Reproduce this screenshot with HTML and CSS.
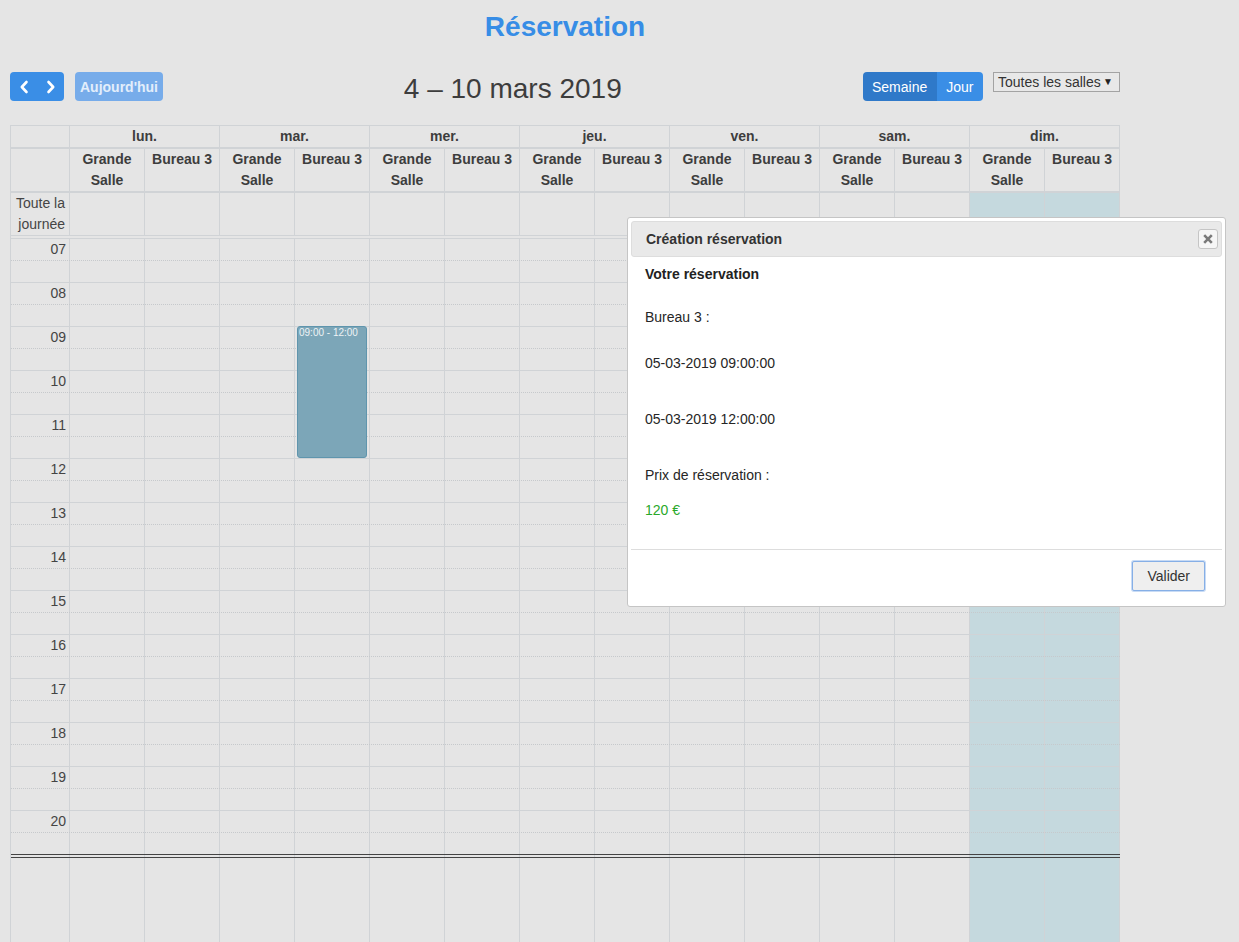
FILE: index.html
```html
<!DOCTYPE html>
<html lang="fr">
<head>
<meta charset="utf-8">
<title>Réservation</title>
<link rel="stylesheet" href="styles.css">
</head>
<body>
<div class="page">
  <h1 class="title">Réservation</h1>
  <div class="toolbar">
    <div class="tb-left">
      <div class="btn-group">
        <button class="btn btn-icon" aria-label="Précédent"><svg width="10" height="14" viewBox="0 0 10 14"><polyline points="7.5,2 2.8,7 7.5,12" fill="none" stroke="#fff" stroke-width="2.6" stroke-linecap="round" stroke-linejoin="round"/></svg></button>
        <button class="btn btn-icon" aria-label="Suivant"><svg width="10" height="14" viewBox="0 0 10 14"><polyline points="2.5,2 7.2,7 2.5,12" fill="none" stroke="#fff" stroke-width="2.6" stroke-linecap="round" stroke-linejoin="round"/></svg></button>
      </div>
      <button class="btn btn-today">Aujourd'hui</button>
    </div>
    <h2 class="range">4 – 10 mars 2019</h2>
    <div class="tb-right">
      <div class="btn-group">
        <button class="btn btn-active">Semaine</button>
        <button class="btn">Jour</button>
      </div>
      <div class="select"><span>Toutes les salles</span><span class="caret">▼</span></div>
    </div>
  </div>

  <div class="cal">
    <div class="row days">
      <div></div>
      <div class="span2">lun.</div>
      <div class="span2">mar.</div>
      <div class="span2">mer.</div>
      <div class="span2">jeu.</div>
      <div class="span2">ven.</div>
      <div class="span2">sam.</div>
      <div class="span2">dim.</div>
    </div>
    <div class="row res">
      <div></div>
      <div>Grande Salle</div><div>Bureau 3</div>
      <div>Grande Salle</div><div>Bureau 3</div>
      <div>Grande Salle</div><div>Bureau 3</div>
      <div>Grande Salle</div><div>Bureau 3</div>
      <div>Grande Salle</div><div>Bureau 3</div>
      <div>Grande Salle</div><div>Bureau 3</div>
      <div>Grande Salle</div><div>Bureau 3</div>
    </div>
    <div class="row allday">
      <div class="axis-label">Toute la journée</div>
      <div></div><div></div><div></div><div></div><div></div><div></div>
      <div></div><div></div><div></div><div></div><div></div><div></div>
      <div class="sun"></div><div class="sun"></div>
    </div>
    <div class="divider"></div>
    <div class="tg">
      <div class="cols">
        <div></div>
        <div></div><div></div><div></div><div></div><div></div><div></div>
        <div></div><div></div><div></div><div></div><div></div><div></div>
        <div class="sun"></div><div class="sun"></div>
      </div>
      <div class="slats">
        <div class="slat"><span class="hl">07</span></div><div class="slat half"></div>
        <div class="slat"><span class="hl">08</span></div><div class="slat half"></div>
        <div class="slat"><span class="hl">09</span></div><div class="slat half"></div>
        <div class="slat"><span class="hl">10</span></div><div class="slat half"></div>
        <div class="slat"><span class="hl">11</span></div><div class="slat half"></div>
        <div class="slat"><span class="hl">12</span></div><div class="slat half"></div>
        <div class="slat"><span class="hl">13</span></div><div class="slat half"></div>
        <div class="slat"><span class="hl">14</span></div><div class="slat half"></div>
        <div class="slat"><span class="hl">15</span></div><div class="slat half"></div>
        <div class="slat"><span class="hl">16</span></div><div class="slat half"></div>
        <div class="slat"><span class="hl">17</span></div><div class="slat half"></div>
        <div class="slat"><span class="hl">18</span></div><div class="slat half"></div>
        <div class="slat"><span class="hl">19</span></div><div class="slat half"></div>
        <div class="slat"><span class="hl">20</span></div><div class="slat half last"></div>
        <div class="dbl"></div>
        <div class="filler"></div>
      </div>
      <div class="event">09:00 - 12:00</div>
    </div>
  </div>
</div>

<div class="dialog">
  <div class="dlg-title">
    <span>Création réservation</span>
    <button class="dlg-close" aria-label="Fermer"><svg width="10" height="10" viewBox="0 0 10 10"><path d="M1.2 1.2 L8.8 8.8 M8.8 1.2 L1.2 8.8" stroke="#7a7a7a" stroke-width="2.6" stroke-linecap="butt"/></svg></button>
  </div>
  <div class="dlg-body">
    <div class="l1">Votre réservation</div>
    <div class="l2">Bureau 3 :</div>
    <div class="l3">05-03-2019 09:00:00</div>
    <div class="l4">05-03-2019 12:00:00</div>
    <div class="l5">Prix de réservation :</div>
    <div class="l6 price">120 €</div>
  </div>
  <div class="pane">
    <button class="btn-valider">Valider</button>
  </div>
</div>
</body>
</html>
```
FILE: styles.css
```css
:root {
  --line: #d0d3d6;
  --bg: #e5e5e5;
  --blue: #3a8ee6;
  --sun: #c5d9de;
}
html, body {
  margin: 0;
  padding: 0;
  overflow: hidden;
  background: var(--bg);
}
body {
  font-family: "Liberation Sans", Arial, sans-serif;
  font-size: 14px;
  color: #333;
  position: relative;
  height: 942px;
}
.page {
  padding: 0 10px;
  width: 1110px;
}
.title {
  margin: 0;
  padding-top: 11px;
  line-height: 32px;
  font-size: 28px;
  font-weight: bold;
  text-align: center;
  color: #378de6;
}
.toolbar {
  margin-top: 29px;
  display: grid;
  grid-template-columns: auto 1fr auto;
  align-items: start;
}
.tb-left, .tb-right {
  display: flex;
  align-items: flex-start;
}
.tb-right { gap: 10px; }
.btn-group { display: flex; }
.btn {
  font-family: inherit;
  font-size: 14px;
  height: 29px;
  border: none;
  margin: 0;
  padding: 0 9.5px;
  background: var(--blue);
  color: #fff;
  display: flex;
  align-items: center;
  justify-content: center;
}
.btn-group .btn:first-child { border-radius: 4px 0 0 4px; }
.btn-group .btn:last-child { border-radius: 0 4px 4px 0; }
.btn-icon { width: 27px; padding: 0; }
.btn-active { background: #2f79c9; }
.btn-today {
  margin-left: 11px;
  border-radius: 4px;
  padding: 0 5px;
  font-weight: bold;
  background: #77acea;
  color: #e3eefb;
}
.range {
  margin: 0;
  text-align: center;
  font-size: 28px;
  font-weight: normal;
  line-height: 29px;
  height: 29px;
  padding-top: 2px;
  box-sizing: content-box;
  color: #3d3d3d;
}
.select {
  width: 127px;
  height: 20px;
  box-sizing: border-box;
  border: 1px solid #a3a3a3;
  background: #e8e8e8;
  display: flex;
  align-items: center;
  justify-content: space-between;
  padding: 0 6px 0 4px;
  color: #333;
  font-size: 14px;
  line-height: 18px;
}
.caret { font-size: 10px; color: #222; }

/* calendar */
.cal {
  margin-top: 22px;
  width: 1110px;
  box-sizing: border-box;
  border-left: 1px solid var(--line);
  border-top: 1px solid var(--line);
}
.row {
  display: grid;
  grid-template-columns: 59px repeat(14, 75px);
}
.row > div {
  box-sizing: border-box;
  border-right: 1px solid var(--line);
}
.span2 { grid-column: span 2; }
.days { border-bottom: 2px solid var(--line); }
.days > div {
  line-height: 21px;
  height: 21px;
  text-align: center;
  font-weight: bold;
  color: #3d3d3d;
}
.res { border-bottom: 2px solid var(--line); }
.res > div {
  height: 42px;
  line-height: 21px;
  text-align: center;
  font-weight: bold;
  color: #3d3d3d;
  padding: 0 2px;
}
.allday { border-bottom: 1px solid var(--line); }
.allday > div { height: 42px; }
.axis-label {
  text-align: right;
  padding-right: 4px;
  line-height: 21px;
  color: #444;
}
.sun { background: var(--sun); }
.divider {
  height: 2px;
  border-right: 1px solid var(--line);
}
.tg {
  position: relative;
  display: grid;
  border-top: 1px solid var(--line);
}
.cols, .slats { grid-area: 1 / 1; }
.cols {
  display: grid;
  grid-template-columns: 59px repeat(14, 75px);
}
.cols > div {
  box-sizing: border-box;
  border-right: 1px solid var(--line);
}
.slat {
  height: 22px;
  box-sizing: border-box;
  border-bottom: 1px dotted #c6c9cc;
}
.slat.half { border-bottom: 1px solid var(--line); }
.slat.last { border-bottom: 1px solid #444; }
.hl {
  display: block;
  width: 59px;
  box-sizing: border-box;
  padding-right: 4px;
  text-align: right;
  line-height: 21px;
  color: #444;
}
.dbl {
  height: 3px;
  box-sizing: border-box;
  border-bottom: 1px solid #444;
}
.filler { height: 90px; }
.event {
  position: absolute;
  top: 87px;
  left: 286px;
  width: 70px;
  height: 132px;
  box-sizing: border-box;
  background: #7ca6b8;
  border: 1px solid #5f95ad;
  border-radius: 3px;
  color: #eef3f5;
  font-size: 10px;
  line-height: 12px;
  padding: 0 1px;
}

/* dialog */
.dialog {
  position: absolute;
  left: 627px;
  top: 217px;
  width: 599px;
  height: 390px;
  box-sizing: border-box;
  background: #fff;
  border: 1px solid #c5c5c5;
  border-radius: 3px;
  padding: 3px;
  color: #333;
  font-size: 14px;
  display: flex;
  flex-direction: column;
}
.dlg-title {
  height: 36px;
  box-sizing: border-box;
  border: 1px solid #dddddd;
  background: #e9e9e9;
  border-radius: 3px;
  display: flex;
  align-items: center;
  justify-content: space-between;
  padding: 0 3px 0 14px;
  font-weight: bold;
  color: #333;
}
.dlg-close {
  width: 20px;
  height: 20px;
  box-sizing: border-box;
  border: 1px solid #c5c5c5;
  background: #f6f6f6;
  border-radius: 3px;
  padding: 0;
  display: flex;
  align-items: center;
  justify-content: center;
}
.dlg-body {
  padding: 7px 13px 0 14px;
  line-height: 20px;
  color: #262626;
}
.l1 { font-weight: bold; color: #222; }
.l2 { margin-top: 23px; }
.l3 { margin-top: 26px; }
.l4 { margin-top: 36px; }
.l5 { margin-top: 36px; }
.l6 { margin-top: 15px; }
.price { color: #2aa82a; }
.pane {
  margin-top: 29px;
  border-top: 1px solid #dddddd;
  padding: 11px 17px 0 0;
  display: flex;
  justify-content: flex-end;
}
.btn-valider {
  height: 30px;
  box-sizing: border-box;
  padding: 0 14px;
  border: 1px solid #86afe6;
  border-radius: 2px;
  background: #efefef;
  color: #333;
  font-family: inherit;
  font-size: 14px;
  box-shadow: 0 0 0 1px #c8dbf5;
}
```
